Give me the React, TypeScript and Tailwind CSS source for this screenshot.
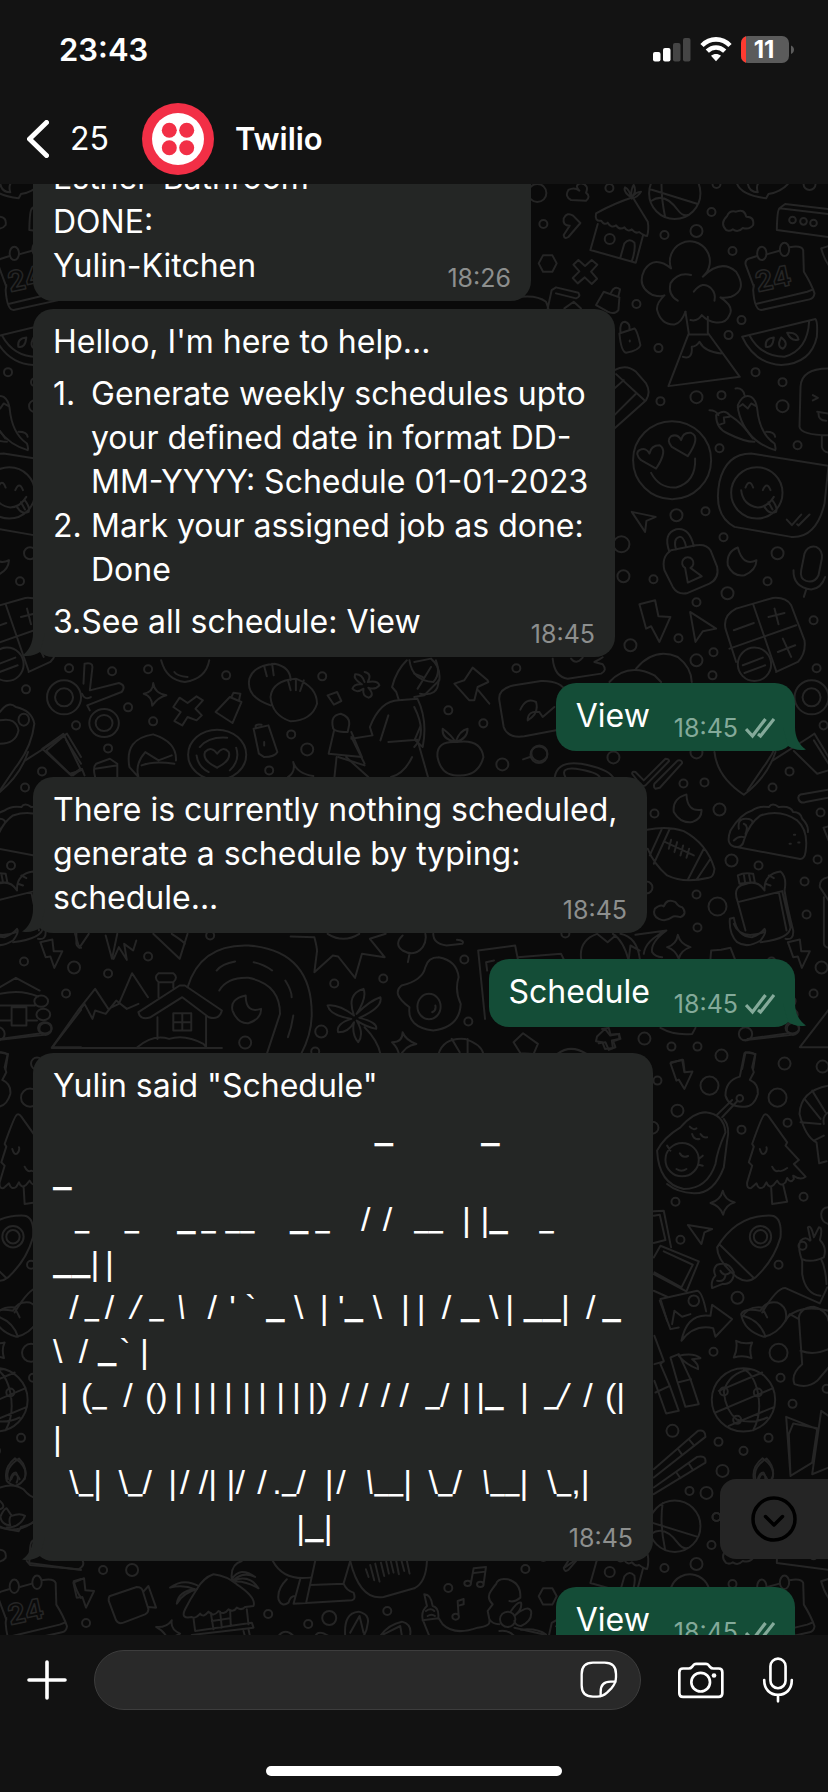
import type { ReactNode } from "react";

type Dot = [number, number, number?];

const dots: Dot[] = [
  [537, 193, 9], [609, 188], [543, 224], [664, 235], [696, 231, 6], [711, 212], [732, 251], [716, 184], [809, 184, 6],
  [636, 304], [741, 320], [728, 335], [658, 348], [755, 372], [782, 382], [782, 406, 6], [696, 397, 6], [721, 395],
  [660, 401], [719, 448], [797, 445], [676, 515, 6], [705, 511], [621, 544, 8], [623, 576, 6], [653, 579], [723, 537],
  [777, 553, 6], [767, 581], [727, 593, 6], [696, 602], [813, 620], [678, 638], [630, 645, 6], [696, 660, 6], [713, 652],
  [712, 675], [816, 668], [811, 697, 9], [811, 697, 17], [823, 725], [516, 668], [448, 710], [483, 723], [539, 753, 8],
  [613, 757, 6], [696, 752, 6], [789, 771], [683, 783], [704, 782], [772, 787], [654, 813], [719, 809, 6], [820, 812],
  [731, 860, 6], [758, 865], [817, 859], [804, 881], [646, 887, 6], [696, 894], [717, 906, 9], [806, 914], [697, 927],
  [821, 967, 6], [813, 993], [644, 1038, 6], [671, 1046], [697, 1046], [721, 1055, 6], [784, 1063, 6], [822, 1066, 6],
  [657, 1080], [709, 1085, 9], [677, 1110, 6], [652, 1127, 6], [741, 1129], [787, 1122], [777, 1097, 9], [675, 1201],
  [680, 1239], [803, 1196], [778, 1264], [737, 1297, 6], [713, 1351], [778, 1352, 9], [780, 1377], [792, 1403],
  [826, 1388], [672, 1430, 6], [718, 1441], [768, 1437], [743, 1450], [722, 1470, 6], [689, 1490], [706, 1492, 6],
  [716, 1516], [112, 671], [148, 669], [226, 675], [322, 676], [128, 707], [153, 721], [108, 748], [291, 734],
  [307, 749, 6], [269, 770], [502, 764, 6], [773, 689], [210, 935], [148, 956], [108, 973], [771, 961], [334, 983],
  [383, 978], [464, 959], [468, 1021], [321, 1031, 6], [245, 1042, 6], [315, 1051], [565, 933], [103, 1569],
  [132, 1569, 6], [86, 1622], [268, 1613], [308, 1623], [329, 1617, 7], [387, 1610], [448, 1587], [525, 1568],
];

/* Each patch of doodles has its own local grid, three units to a pixel. */
const patches: { at: string; d: string[] }[] = [
  {
    at: "translate(414 0) scale(.3333)",
    d: [
      "M545 640 Q540 665 560 662 q10 15 20 6 q10 18 25 8 q10 15 25 6 q10 15 22 6 q12 14 22 8 q16 12 24 12 Q704 690 700 665 L655 592 Q600 610 545 640Z",
      "M550 672 L528 750 L664 788 L686 706 M618 772 L630 730 Q645 712 660 728 Q664 750 652 784 M601 717 a15 15 0 1 0 -30 0 a15 15 0 1 0 30 0",
      "M650 592 Q625 575 632 562 Q645 568 650 592 Q650 565 658 555 Q668 575 652 592 Q665 575 680 575 Q672 590 652 596",
      "M858 580 a77 77 0 1 0 -154 0 a77 77 0 1 0 154 0 M705 567 L850 612 M745 510 Q735 570 752 650 M710 603 Q750 575 790 630 Q805 650 820 645",
      "M470 600 Q450 590 462 570 Q480 560 495 572 Q478 555 500 550 Q525 555 515 578 Q530 590 515 602Z",
      "M448 655 q10 -20 28 -8 l22 22 l-36 42 q-12 8 -14 -6 l18 -28 q-22 0 -18 -22Z",
      "M935 690 Q915 670 938 648 Q945 630 965 635 Q990 625 995 650 Q1020 650 1016 675 Q1005 690 985 684 Q970 700 955 688 Q945 695 935 690Z",
      "M1095 625 L1242 642 M1095 625 Q1088 630 1087 690 L1242 711 M1095 625 L1112 612 L1250 628 M1144 660 a10 10 0 1 0 -20 0 a10 10 0 1 0 20 0 M1177 664 a10 10 0 1 0 -20 0 a10 10 0 1 0 20 0 M1207 669 a10 10 0 1 0 -20 0 a10 10 0 1 0 20 0",
      "M968 552 Q980 585 1055 595 L1062 582 Q1100 575 1120 552 M1000 552 q5 25 30 25 q-5 -15 0 -25",
      "M386 766 L414 766 L427 790 L414 815 L386 815 L373 790Z",
      "M512 798 L532 780 L549 794 L530 815 L548 836 L532 852 L511 832 L490 850 L475 834 L495 814 L477 794 L492 780Z",
      "M770 805 A60 60 0 1 1 865 830 Q920 775 965 815 Q1000 870 950 890 Q930 895 918 892 Q960 920 945 945 Q935 970 905 967 Q880 965 862 945 Q850 965 828 960 M770 805 Q720 765 690 810 Q665 860 715 885 Q740 892 750 886 Q725 910 728 930 Q740 975 780 973 Q800 970 813 935",
      "M830 825 Q790 815 768 850 Q760 885 790 902 M838 875 Q865 840 890 865 Q905 880 900 902",
      "M1028 768 L1002 776 Q990 782 994 795 L1018 860 M1056 763 L1095 752 M1125 742 Q1160 735 1166 750 L1168 815 Q1190 850 1200 880 Q1198 895 1185 898 L1040 930 Q1020 930 1016 870 L1018 855 M1024 912 L1178 875 L1196 868",
      "M1056 760 a14 20 0 1 0 -28 0 a14 20 0 1 0 28 0 M1124 748 a14 20 0 1 0 -28 0 a14 20 0 1 0 28 0",
      "M400 925 L412 870 L425 862 L492 878 Q500 890 485 895 L425 880 M450 925 L478 905 L500 925 M320 890 Q370 885 395 905 L402 925",
      "M545 915 L568 875 L615 892 L612 930 Q600 945 580 935Z M590 878 Q600 855 617 868 L612 888",
      "M1220 745 L1242 738 M1220 745 Q1228 775 1242 795",
    ],
  },
  {
    at: "translate(414 300) scale(.3333)",
    d: [
      "M813 35 L823 100 L762 258 L976 230 L880 98 L880 50 M823 103 H880 M805 170 Q835 180 832 140 Q845 140 855 125 Q870 155 920 160",
      "M615 100 L660 85 Q668 90 678 135 Q675 150 635 158 Q620 155 615 100 M618 98 Q615 65 632 65 Q648 70 645 88 M646 121 v3",
      "M983 110 L1203 57 Q1210 65 1207 110 Q1190 190 1100 195 Q1020 190 983 110 M1005 106 Q1040 170 1110 170 Q1180 150 1184 62",
      "M1078 112 Q1050 115 1054 140 Q1075 145 1078 112 M1100 112 Q1085 140 1105 146 Q1125 130 1100 112 M1118 98 Q1130 125 1152 118 Q1148 95 1118 98",
      "M600 210 Q635 190 665 215 L695 250 Q710 275 695 300 L600 385 M605 222 L690 300 M600 265 L628 240 M600 345 L665 280",
      "M905 345 Q905 385 940 400 Q990 425 1020 425 M905 345 Q930 325 945 345 Q985 370 1015 415 M885 330 Q905 330 912 345 M912 375 L930 368 L928 352 L945 350",
      "M970 315 Q985 280 1010 290 Q1025 300 1028 325 Q1035 400 1080 430 Q1085 445 1082 450 Q1000 425 975 345 Q970 330 970 315 M963 265 Q985 262 990 285 M1055 395 Q1080 395 1082 410 M970 322 L985 312 L1000 325 L1010 310 L1025 318",
      "M1242 205 Q1160 205 1158 260 L1155 380 Q1160 405 1242 405 M1195 285 l15 8 -15 8 M1222 405 V440 Q1225 455 1242 457 M1208 335 L1242 340 M1212 336 Q1210 362 1235 362",
      "M890 480 a117 117 0 1 0 -234 0 a117 117 0 1 0 234 0 M725 505 L680 480 Q660 460 675 450 Q695 440 705 460 Q710 435 735 435 Q762 450 725 505 M820 468 L772 440 Q755 420 770 408 Q790 400 800 420 Q805 395 830 398 Q860 410 820 468 M710 518 Q735 565 785 562 Q845 545 842 475",
      "M1242 497 L1010 460 Q935 460 915 545 Q895 645 960 680 L1130 710 Q1205 715 1230 610 L1242 497 M1104 578 a77 77 0 1 0 -154 0 a77 77 0 1 0 154 0 M993 562 q12 -28 23 0 M1045 570 q12 -28 23 0 M980 570 Q985 615 1030 622 Q1060 620 1078 590 M1050 620 Q1065 645 1085 635 Q1090 620 1072 598 M1062 606 l12 22 M1117 658 L1132 675 L1160 643 M1148 672 L1152 676 L1185 643",
      "M652 635 L724 650 L696 662 L692 695Z",
      "M770 750 Q740 770 750 810 L775 860 Q790 885 820 878 L885 850 Q915 835 908 800 L888 750 Q875 730 845 735Z M765 755 Q745 700 785 687 Q825 680 838 738 M785 748 Q775 715 795 710 Q808 708 815 740 M812 803 a17 17 0 1 1 16 0 L862 828 L820 847Z",
      "M970 742 Q935 755 940 795 Q955 830 990 825 Q1025 810 1026 780 Q985 800 970 742Z",
      "M1170 760 Q1180 735 1205 740 Q1225 750 1222 775 L1212 825 Q1200 850 1175 842 Q1155 835 1160 810Z M1137 810 Q1135 860 1190 868 Q1220 865 1232 830 M1175 868 L1168 890",
      "M675 912 L722 900 L732 948 L768 950 L735 1025 L710 978 L695 985Z M827 935 L905 985 L865 993 L843 1025Z",
      "M965 925 L1075 893 Q1115 890 1130 915 L1170 1020 Q1175 1060 1150 1085 L1085 1115 M965 925 Q925 945 933 985 L965 1085 M1017 915 L1085 1112 M945 1045 L1145 975 M958 990 L1018 968 M1080 925 L1092 972 M1062 950 L1110 938 M1090 1055 L1142 1035 M1105 1015 L1130 1070",
      "M1070 1092 a50 50 0 1 0 -100 0 a50 50 0 1 0 100 0 M985 1095 L1045 1072 M990 1118 L1052 1095",
      "M665 1105 Q720 1040 790 1070 Q830 1100 832 1145 M585 1145 Q640 1085 720 1125 L740 1145",
      "M415 1075 Q420 1130 460 1135 L560 1120 Q580 1110 565 1092 L540 1085 Q560 1075 565 1071 M470 1075 Q485 1095 505 1072",
      "M175 1102 L220 1140 L222 1145 L190 1160 L180 1200 L165 1200 L120 1150 L150 1140Z M192 1170 L225 1210",
      "M255 1200 Q250 1165 300 1155 L380 1142 Q440 1140 455 1175 M255 1200 L268 1280 Q280 1315 330 1308 L425 1290 M318 1228 Q335 1190 365 1205 Q375 1240 340 1260 Q340 1230 375 1235 L385 1250 L420 1220",
      "M1075 1380 L1185 1310 L1200 1300 L1242 1370 M0 1085 L50 1075 Q80 1100 75 1140 L30 1185 L0 1190 M0 1120 L25 1130 M10 1165 L50 1100 M0 1220 Q40 1300 0 1340",
    ],
  },
  {
    at: "translate(600 740) scale(.3333)",
    d: [
      "M95 100 Q95 92 105 95 L130 120 L195 55 Q205 55 206 62 L135 135 Q125 140 118 130Z M165 145 Q158 140 162 130 L232 60 Q245 58 245 68 L178 142Z",
      "M342 35 Q350 110 430 163 Q500 110 525 35 M258 162 Q215 175 220 215 Q240 250 275 245 Q305 235 303 208 Q260 215 258 162Z",
      "M140 268 Q200 255 250 272 Q320 310 342 385 Q340 410 325 412 Q250 430 200 405 Q160 370 142 325 M208 265 L160 370 M185 264 L148 345 M310 325 L262 418 M330 355 L288 418 M195 305 L280 345 M212 298 L205 325 M230 305 L222 335 M248 315 L240 345 M266 325 L258 352",
      "M400 318 Q375 310 390 270 Q420 220 455 210 Q475 195 505 200 Q515 185 535 200 Q570 195 578 215 Q600 215 605 235 Q625 255 622 275 M400 318 L595 355 Q612 358 615 335 Q625 270 590 240 Q540 205 480 225 Q445 250 430 300 Q425 325 400 318 M415 265 q-5 -30 20 -30 q25 0 20 15 M430 250 q15 5 5 30 M400 300 q15 -15 30 -10",
      "M580 283 h4 M567 310 h4 M593 306 h4",
      "M412 485 L545 452 L570 560 Q568 595 480 605 M412 485 Q395 440 430 432 Q470 415 492 450 M412 485 L435 570 M535 455 L558 570 M552 450 Q560 500 578 570 Q580 600 555 595 M417 430 L412 405 Q430 395 458 400 L463 425 Q440 425 417 430 M430 402 L434 428 M445 400 L450 425 M492 450 Q490 400 540 393 Q560 410 552 450 M505 405 l15 8 M495 430 l15 5",
      "M388 535 L400 532 Q410 590 455 590 Q480 580 492 565 Q500 575 480 600 Q440 625 410 605 Q385 580 388 535Z M400 550 Q420 600 490 575",
      "M175 535 Q155 525 163 505 Q180 490 190 498 Q200 472 225 485 Q235 500 245 500 Q262 520 240 530 Q220 525 215 530 Q195 545 175 535Z",
      "M232 583 Q240 612 270 620 Q240 630 235 655 Q225 628 200 620 Q228 612 232 583Z M562 605 L598 597 L602 632 L628 632 L604 682 L592 648 L578 650Z",
      "M105 583 L198 570 Q150 605 155 635 Q165 650 185 650 M130 640 Q135 600 195 572 M330 655 L332 630 L362 628 L390 622 L403 655 M60 580 Q110 590 118 655 M90 615 L85 655 M90 615 L118 630",
      "M684 410 Q655 415 658 440 L684 480 M670 470 V610 Q672 620 684 622 M684 148 L600 162 Q590 168 595 178 Q600 190 615 185 L684 172 M669 262 L684 258 M669 262 L684 300 M580 32 L650 100 L684 90 M640 0 L684 70",
      "M5 865 L25 862 L30 882 L55 880 L60 895 L38 902 L45 920 L25 928 L15 905 L-5 908 M180 862 Q220 885 275 880 L285 862 M455 880 a20 20 0 1 0 -40 0 a20 20 0 1 0 40 0 M595 865 a18 18 0 1 0 -36 0 a18 18 0 1 0 36 0 M430 899 L580 882 M598 920 H684 M598 920 L684 808 M425 985 L435 935 L465 940 L458 985 M212 965 L248 958 L252 990",
    ],
  },
  {
    at: "translate(400 1040) scale(.3333)",
    d: [
      "M810 68 L845 57 L852 95 L876 93 L852 145 L835 117 L828 120Z",
      "M1032 38 Q1050 30 1064 42 L1055 80 L1060 95 L1048 118 Q1075 130 1072 160 Q1060 200 1030 198 Q985 200 975 165 Q975 120 1018 108Z M1028 173 a10 10 0 1 0 -20 0 a10 10 0 1 0 20 0 M1010 182 L965 230 M995 178 L950 222",
      "M770 330 Q790 290 840 260 Q880 215 915 215 Q970 220 975 275 Q950 330 945 370 Q920 445 850 445 Q775 430 770 330Z M970 235 Q990 260 980 300 L970 380 Q940 460 880 458 Q830 455 800 430 M895 357 a50 50 0 1 0 -100 0 a50 50 0 1 0 100 0 M868 258 q10 12 20 5 M875 280 q5 18 22 15 M900 280 q8 12 20 10 M838 338 q8 15 25 8 M828 385 q15 10 30 0 M800 315 l10 15 M895 355 l12 -10 M895 372 l12 3",
      "M1092 222 Q1085 225 1055 310 L1060 318 L1045 365 L1055 375 L1040 425 Q1038 445 1052 442 L1068 428 Q1075 450 1090 438 L1098 425 Q1105 445 1120 432 L1130 420 Q1140 440 1155 425 L1160 412 Q1170 430 1180 415 L1178 405 Q1200 420 1215 408 L1180 370 L1195 358 L1155 315 L1160 305 L1105 228 Q1098 218 1092 222Z M1112 440 L1115 490 L1160 483 L1148 432 M1078 325 q5 20 15 13 q8 -8 5 -18 M1115 378 q8 18 20 12 q5 5 25 -8",
      "M967 450 Q972 478 1003 485 Q975 492 968 522 Q958 495 930 487 Q960 478 967 450Z M862 553 L935 565 L912 575 L903 610Z",
      "M950 620 Q1010 520 1115 525 Q1145 530 1140 590 Q1120 660 1065 710 Q1040 730 1010 710 Q950 660 950 620 M958 612 L1060 712 M1112 588 a32 32 0 1 0 -64 0 a32 32 0 1 0 64 0 M1100 588 a20 20 0 1 0 -40 0 a20 20 0 1 0 40 0 M950 672 Q985 660 1000 695 Q1000 730 965 730 L935 742 Q930 720 945 705 Q935 685 950 672 M960 690 q10 20 30 5 M950 720 q20 5 25 -15",
      "M760 512 L790 510 L812 620 M760 525 L778 522 L795 598 L760 607 M780 615 L895 662 L858 752 L760 700 M790 632 L877 672 L843 740 L762 695 M780 615 L760 650",
      "M1205 660 Q1190 620 1200 600 Q1215 585 1228 600 M1230 598 L1222 560 Q1232 550 1240 590 L1255 560 Q1268 560 1258 598 Q1280 620 1270 650 Q1230 668 1205 655 L1205 700 Q1215 760 1260 765 M1262 655 Q1275 680 1278 730 M1218 615 a12 12 0 1 0 -24 0 a12 12 0 1 0 24 0",
      "M1085 815 Q1130 740 1155 742 L1258 788 L1280 740 M760 750 L800 768 M780 775 L890 750 Q905 752 917 812 M780 775 L800 840 M896 780 a16 16 0 1 0 -32 0 a16 16 0 1 0 32 0 M1025 830 Q1040 795 1085 800 L1100 830 M1160 830 Q1200 790 1284 810",
      "M1284 135 Q1200 150 1197 220 Q1215 290 1248 305 L1256 368 L1278 362 M1212 175 L1260 235 M1200 245 L1260 250 M1235 150 L1275 215 M1270 250 Q1265 225 1284 215 M1270 285 L1240 300 M1284 550 Q1262 545 1262 520 Q1265 500 1284 500",
    ],
  },
  {
    at: "translate(400 1300) scale(.3333)",
    d: [
      "M843 120 Q860 35 930 45 L935 12 L995 55 L945 108 L938 82 Q880 70 843 120Z M778 0 L810 85 L835 80 M815 70 L822 30 L845 48 L870 40",
      "M1090 108 Q1030 90 1022 40 Q1030 20 1080 30 Q1095 0 1130 5 Q1165 20 1155 60 Q1130 100 1090 108 M1028 45 Q1080 60 1095 108",
      "M1195 50 Q1200 20 1240 18 Q1280 30 1284 60 M1195 50 L1205 190 Q1170 220 1182 250 Q1220 265 1250 240 L1284 200 M1200 150 Q1240 165 1284 145 M1155 60 L1168 40 L1195 55 M1007 120 Q1030 132 1055 125 Q1045 145 1053 172 Q1028 162 1000 170 Q1012 145 1007 120",
      "M1124 297 a95 95 0 1 0 -190 0 a95 95 0 1 0 190 0 M945 335 L1118 262 M955 270 L1085 215 M985 375 L1122 318 M970 272 Q985 215 1050 205 M970 272 Q975 330 1010 357 Q1060 370 1100 350 M1072 275 Q1060 220 1030 205 M1072 275 Q1085 340 1058 388 M982 272 a12 12 0 1 0 -24 0 a12 12 0 1 0 24 0 M1084 275 a12 12 0 1 0 -24 0 a12 12 0 1 0 24 0 M1022 357 a12 12 0 1 0 -24 0 a12 12 0 1 0 24 0",
      "M762 105 L790 180 L780 190 L808 255 L835 330 L797 338 L762 240 M762 190 L790 182 M765 275 L808 255 M810 170 L835 160 L870 235 L895 310 L855 318 L830 240Z M832 245 L872 235 M835 165 Q880 155 900 172 L875 175 Q895 190 893 205 Q855 190 835 165",
      "M760 505 L893 390 Q915 385 915 408 L760 530 M760 560 L890 468 Q918 462 915 485 L760 580 M832 443 L845 462 M865 415 L882 435 M828 515 L840 532 M865 488 L878 508",
      "M1157 348 L1250 385 L1235 485 L1170 525Z M1170 525 L1165 400 L1178 368 L1250 382 M1284 345 L1262 330 L1235 520 L1284 500 M1065 535 Q1055 500 1098 473 Q1125 500 1115 535 M1075 535 Q1085 505 1100 535",
    ],
  },
  {
    at: "translate(747 1300) scale(.3333)",
    d: [
      "M20 540 Q10 500 45 472 Q85 500 75 530 Q65 550 45 555 Q28 550 20 540 M30 540 Q35 515 48 515 Q58 530 50 545 M0 560 Q40 545 70 565 Q90 590 110 592 M0 600 Q20 620 0 625 M0 680 Q60 700 110 655 M0 650 Q10 625 20 622 L35 645 Q60 635 75 645 Q60 680 20 680",
    ],
  },
  {
    at: "translate(0 660) scale(.528 .3333)",
    d: [
      "M158 70 L160 10 Q175 5 175 20 L170 90 L225 68 Q240 75 230 95 L165 135 L170 150 M225 188 a28 42 0 1 0 -56 0 a28 42 0 1 0 56 0 M213 188 a16 24 0 1 0 -32 0 a16 24 0 1 0 32 0 M155 100 Q160 120 172 110",
      "M290 68 Q292 98 315 105 Q300 110 288 136 Q288 108 272 100 Q290 95 290 68Z M340 112 L355 128 L372 108 L384 120 L370 145 L382 165 L372 180 L355 170 L345 195 L330 182 L342 155 L328 140Z M408 155 L435 110 L457 125 L440 188Z M438 110 L442 97 L455 100 L452 122",
      "M305 0 Q315 60 350 65 Q390 55 396 0 M330 35 q5 12 25 15 M512 135 Q465 110 472 55 Q480 15 520 10 Q550 20 550 60 M512 110 Q515 60 560 55 Q600 80 600 130 Q590 180 550 183 Q515 165 512 110 M545 60 L550 90 M560 55 V90 M575 60 L568 92 M500 18 L505 48 M515 10 L518 45 M620 105 L638 95 L646 122 L632 133Z",
      "M690 35 Q705 40 696 65 Q715 60 718 75 Q710 90 697 82 Q710 105 698 112 Q685 108 688 85 Q675 100 667 85 Q670 70 685 72 Q668 55 672 42 Q685 40 690 65",
      "M770 0 Q750 30 742 80 L750 95 L755 120 Q720 120 700 200 L705 225 L665 235 M755 120 L790 115 Q810 180 800 260 L785 238 L795 200 M775 0 Q780 60 820 65 Q835 40 825 0 M795 100 Q830 110 830 60 M735 245 L790 238 L810 350 M735 165 L720 240 M665 230 L690 310 M640 290 L690 315 M780 290 Q765 340 740 350",
      "M630 200 Q625 165 645 160 Q665 170 660 200 L658 215 Q630 215 630 200 M632 212 L622 280 L685 290 L665 215 M637 290 L633 350 M655 290 L697 350",
      "M865 245 Q825 240 828 290 Q835 345 865 345 Q905 350 915 290 Q910 235 865 245 M862 245 Q855 225 838 205 Q835 235 862 245 Q870 210 885 205 Q885 235 862 245",
      "M480 205 L508 195 L525 275 Q520 290 500 290 L490 280Z M485 203 Q480 190 495 193 M500 245 v10 M80 265 L120 220 L152 325 L135 345Z M138 345 L155 325 L160 345 M88 270 L122 225",
      "M245 320 Q235 235 290 222 Q335 245 333 300 M262 350 Q255 310 275 275 L300 300 L325 285 M268 315 Q290 300 330 310 M245 320 L262 350 M466 283 a55 75 0 1 0 -110 0 a55 75 0 1 0 110 0 M378 260 Q395 228 430 232 M372 285 Q375 320 395 335 M447 262 Q455 300 435 330 M411 322 Q382 300 388 275 Q400 255 411 280 Q422 255 433 275 Q438 300 411 322",
      "M180 350 Q175 320 182 310 L208 295 L222 310 V350 M180 325 L220 315 M555 305 Q562 340 593 347 M555 305 Q560 335 545 350 M1036 283 a16 25 0 1 0 -32 0 a16 25 0 1 0 32 0 M990 297 L1003 290 M1050 350 Q1055 300 1100 310 Q1150 325 1160 350 M1070 350 Q1060 320 1090 325 Q1130 335 1135 350",
      "M142 820 L150 862 L168 820 M200 825 L212 895 L222 820 M215 895 L225 860 L240 898 L235 850 L252 870 L258 840 M290 820 L340 895 L355 820 M325 820 Q345 840 350 850",
      "M355 980 Q380 850 470 855 Q590 870 590 1060 Q590 1120 570 1180 M415 990 Q430 950 470 952 Q530 970 530 1060 L505 1180 M410 930 Q420 910 445 903 M480 905 Q500 912 515 930 M540 960 Q552 990 552 1010 M555 1065 Q552 1100 545 1130 M465 1005 Q435 1015 440 1050 Q450 1090 470 1088 Q495 1075 494 1045 Q465 1060 465 1005Z",
      "M550 828 L595 830 Q600 860 600 872 L595 935 L630 885 L640 888 L672 952 L685 880 L728 890 L700 835 L730 820 M620 820 Q650 850 680 820",
      "M98 1162 H420 M98 1162 L150 1045 L180 985 L205 1045 L225 1030 L250 938 L280 1010 M150 1050 L160 1030 L175 1075 L180 1050 L200 1060 L220 1020 L240 1045 L262 1030",
      "M262 1055 L340 975 L350 975 L420 1050 Q415 1080 395 1070 L345 1010 L285 1070 Q265 1080 262 1055 M300 1010 V965 Q290 950 300 938 H328 Q338 950 328 965 V982 M302 965 H328 M298 1070 V1135 M390 1068 V1160 M328 1058 H362 V1110 H328Z M345 1058 V1110 M328 1085 H362 M260 1160 Q290 1120 320 1135 Q350 1120 385 1150 L390 1160",
      "M670 1065 Q655 1000 688 985 Q695 1010 675 1060 Q700 1020 720 1010 Q725 1040 680 1072 Q715 1085 712 1105 Q695 1100 675 1080 Q690 1120 678 1145 Q665 1120 670 1085 Q660 1115 640 1115 Q635 1090 665 1075 Q625 1065 620 1035 Q640 1030 670 1065 M690 1100 Q715 1140 720 1180",
      "M830 890 Q865 900 868 950 Q860 990 872 1030 Q870 1100 820 1110 Q770 1100 775 1040 Q740 1000 760 975 Q800 960 805 920 Q810 890 830 890 M834 1038 a22 38 0 1 0 -44 0 a22 38 0 1 0 44 0 M818 1055 q8 -5 6 -20",
      "M762 825 Q745 850 762 870 Q785 890 800 860 Q808 840 805 820 M775 880 L772 905 M820 820 Q820 850 845 855 L875 850 Q880 840 865 838 M980 895 L975 855 L905 870 L918 1075 M922 930 L920 905 L935 900 M980 890 L1062 880 L1068 900 M1100 895 Q1095 840 1130 820 M1160 820 Q1180 840 1190 900 M1130 820 L1150 845 L1165 825",
      "M762 1115 Q768 1140 788 1150 Q765 1155 757 1190 M762 1115 Q762 1145 742 1145 Q755 1165 755 1185 M830 1180 Q840 1130 880 1135 Q910 1150 915 1180 M855 1135 L870 1175 M885 1135 V1180 M990 1118 L1018 1150 L1010 1180 L985 1178 L972 1145Z M1055 1180 Q1080 1150 1110 1180 M1145 1105 L1155 1125 L1172 1120 V1135 L1158 1140 L1160 1162 L1145 1165 L1140 1145 L1128 1142 L1130 1128Z",
    ],
  },
  {
    at: "translate(747 660) scale(.528 .3333)",
    d: [
      "M0 155 Q15 120 30 140 Q60 150 65 190 Q60 260 30 320 L0 390 M55 178 a10 18 0 1 0 -20 0 a10 18 0 1 0 20 0 M0 180 Q30 170 35 210 Q30 250 0 250",
      "M0 980 L30 952 L75 990 M0 1000 Q40 985 72 1008 M91 1022 a13 17 0 1 0 -26 0 a13 17 0 1 0 26 0 M95 1062 a13 17 0 1 0 -26 0 a13 17 0 1 0 26 0 M98 1102 a13 17 0 1 0 -26 0 a13 17 0 1 0 26 0 M22 1040 H50 V1095 H22Z M0 1035 H66 M0 1080 H20 M52 1080 H70 M0 1135 L78 1118",
    ],
  },
  {
    at: "translate(0 1560) scale(.3333)",
    d: [
      "M220 65 L252 52 L256 88 L282 90 L258 140 L247 108 L230 110Z M330 105 L410 78 Q425 78 428 90 L445 145 Q445 155 435 160 L370 185 Q355 190 348 178 L326 120 Q325 108 330 105 M430 92 L445 75 L468 140 L445 138",
      "M575 168 Q540 175 555 145 Q570 115 590 85 Q610 50 640 40 Q680 45 710 70 Q770 110 760 135 L735 138 Q725 150 710 140 Q700 155 685 145 Q670 165 655 150 Q640 170 625 152 Q610 172 600 158 Q585 175 575 168Z M580 170 L585 210 L755 185 L760 200 L575 222 M632 155 L640 205 M690 148 L692 195 M660 152 L665 200 M635 180 L690 172 M740 145 L745 190 M730 210 L735 228 M745 205 L750 228",
      "M595 75 Q550 50 510 80 Q550 70 585 85 Q535 90 530 128 Q550 95 590 85 M695 55 Q690 10 725 0 M695 55 Q720 15 765 48 Q730 30 700 58 Q750 40 775 82 Q735 60 705 62 M515 178 Q510 205 540 218 L520 228 M515 178 Q500 200 468 198 Q490 210 500 228",
      "M80 0 L90 12 L235 25 Q255 15 248 0 M818 0 Q850 60 930 50 M945 0 L918 125 M1050 0 L1030 68 Q1040 90 1060 95 Q1068 115 1055 118 L880 128 L900 55 M930 72 L1030 68 M860 55 Q830 85 835 115 Q845 140 865 125 Q870 105 885 105",
      "M1050 0 Q1080 120 1150 108 L1242 82 M1097 25 L1105 48 M1110 12 L1122 58 M1125 8 L1138 62 M1142 5 L1152 45 M1158 2 L1166 38 M1172 2 L1180 35 M1188 0 L1196 40 M1204 0 L1212 30 M1220 0 L1228 38",
      "M1035 225 Q1030 155 1075 152 Q1110 160 1102 190 Q1100 210 1090 225 M1050 215 L1078 165 L1090 215 M1140 225 Q1165 190 1205 182 Q1235 190 1230 220 M1150 220 L1200 195 L1205 225 M835 225 Q855 200 880 225 M945 225 Q955 205 985 225",
    ],
  },
  {
    at: "translate(414 1560) scale(.3333)",
    d: [
      "M0 82 Q35 65 38 0 M170 65 L178 22 L215 18 L208 68 M178 36 L213 32 M170 67 a10 8 0 1 0 -20 0 a10 8 0 1 0 20 0 M208 70 a10 8 0 1 0 -20 0 a10 8 0 1 0 20 0 M133 165 L130 120 L148 114 V130 L133 134 M134 167 a10 9 0 1 0 -20 0 a10 9 0 1 0 20 0",
      "M30 100 Q50 100 55 135 Q75 140 72 170 L85 190 Q120 225 190 200 Q230 195 225 180 M30 100 L38 135 Q20 150 25 175 L45 225 M35 150 q15 -10 25 0 M40 165 q12 -8 22 0 M25 178 L72 172",
      "M235 130 Q215 110 230 90 Q240 75 245 70 Q250 50 280 55 Q320 65 318 110 Q300 125 285 120 M235 130 L220 150 L225 175 Q235 190 255 190 M303 175 a23 23 0 1 0 -46 0 a23 23 0 1 0 46 0 M290 150 Q310 120 320 125 Q325 145 300 165 Q340 130 350 150 Q355 180 320 195 Q305 195 300 180 M300 200 L395 222 M255 210 Q280 205 300 225 M450 20 L480 0",
    ],
  },
];

const tileShifts: [number, number][] = [[0, 0], [-747, 0], [0, 1332], [-747, 1332]];

function Doodles() {
  return (
    <g fill="none" stroke="#252525" strokeWidth={2} strokeLinecap="round" strokeLinejoin="round">
      {dots.map(([x, y, r = 4], i) => <circle key={i} cx={x} cy={y} r={r} />)}
      {patches.map((p, i) => (
        <g key={i} transform={p.at}>
          {p.d.map((d, j) => <path key={j} d={d} vectorEffect="non-scaling-stroke" />)}
        </g>
      ))}
      <text x="757" y="292" fontSize="28" fontWeight="700" fontFamily="Inter, sans-serif" strokeWidth={1.5} transform="rotate(-12 757 292)">24</text>
    </g>
  );
}

function Wallpaper() {
  return (
    <svg aria-hidden="true" className="absolute inset-0 h-full w-full" viewBox="0 184 828 1450" preserveAspectRatio="xMinYMin slice">
      {tileShifts.map(([x, y]) => (
        <g key={`${x}:${y}`} transform={`translate(${x} ${y})`}><Doodles /></g>
      ))}
    </svg>
  );
}

function Ticks() {
  return (
    <svg aria-label="Delivered" viewBox="0 0 30 22" className="h-[22px] w-[30px]" fill="none" stroke="currentColor" strokeWidth="3.2">
      <path d="M1 12 L7.5 19 L20.5 2" />
      <path d="M13 17 L15.5 19 L29 2" />
    </svg>
  );
}

function Incoming({ width, time, tail, children }: { width: string; time: string; tail?: boolean; children: ReactNode }) {
  return (
    <article className={`relative ml-[33px] max-w-[80%] rounded-[20px] bg-[#242625] px-5 pt-[11px] pb-[13px] ${width}`}>
      {children}
      <time className="absolute right-5 bottom-[7px] text-[25px] leading-8 text-[#8d8f8e]">{time}</time>
      {tail && (
        <svg aria-hidden="true" viewBox="0 0 24 24" className="absolute bottom-0 -left-3 h-6 w-6 text-[#242625]" fill="currentColor">
          <path d="M12 0 C12 10 8 18 1 22.500 C8 24 15 22 19 19 L24 0 Z" />
        </svg>
      )}
    </article>
  );
}

function Outgoing({ text, time }: { text: string; time: string }) {
  return (
    <article className="relative mr-[33px] flex items-end gap-6 self-end rounded-[20px] bg-[#144d37] px-5 pt-[11px] pb-[13px]">
      <p>{text}</p>
      <div className="-mb-1.5 flex items-center gap-[7px] text-[#84aa9a]">
        <time className="text-[25px] leading-8">{time}</time>
        <Ticks />
      </div>
      <svg aria-hidden="true" viewBox="0 0 24 24" className="absolute -right-3 bottom-0 h-6 w-6 text-[#144d37]" fill="currentColor">
        <path d="M12 0 C12 10 16 18 23 22.500 C16 24 9 22 5 19 L0 0 Z" />
      </svg>
    </article>
  );
}

/* In the rows below "~" is a light underscore, "«" and "»" are a slanted "/" and "\",
   ":" is a hair space and ";" a thin space. */
const s = (n: number) => " ".repeat(n);
const banner = [
  s(34) + "_" + s(9) + ":_",
  "_",
  "  :~   ;~    _::~ ~~   ;_;~   :/ :/  :~~  | |_   :~",
  "__|::|",
  " ;/::~::/ ;« ~ :»  :/ :' ` _ \\ ;| '_ \\  |;| ;/ _ \\;| __| ;/;_",
  "\\ ;/ _:` |",
  ";| :(~ ;/ :();| |;|;| |;| |;|;|) :/ / :/ / ;~/ :|::|_ ;| ::~« ::/ :(|",
  "|",
  " ;\\~| ;\\~/ ;|:/ /| |/ :/::.~/  |:/  »~~| ;\\~/  »~~|  \\~,|",
  s(25) + ";|_|",
];

function BannerRow({ row }: { row: string }) {
  return (
    <p className="h-11 whitespace-pre">
      {[...row].map((c, i) => {
        if (c === "~") return <span key={i} className="font-[Inter] text-[32px] leading-none">_</span>;
        if (c === "_") return <span key={i} className="font-[Inter] text-[41px] leading-none">_</span>;
        if (c === "«") return <i key={i}>/</i>;
        if (c === "»") return <i key={i}>\</i>;
        return c === ":" ? "\u200a" : c === ";" ? "\u2009" : c;
      })}
    </p>
  );
}

function StatusBar() {
  return (
    <div className="flex items-center justify-between pr-[33px] pl-[59px]">
      <time className="text-[31px] leading-10 font-semibold">23:43</time>
      <svg aria-label="Two bars of signal, Wi-Fi on, battery at 11 percent" viewBox="0 0 142 28" className="h-7 w-[142px]">
        <rect x="0" y="16" width="7.500" height="9.500" rx="2" fill="#fff" />
        <rect x="10" y="12" width="7.500" height="13.500" rx="2" fill="#fff" />
        <rect x="20" y="7" width="7.500" height="18.500" rx="2" fill="#454545" />
        <rect x="30" y="2" width="7.500" height="23.500" rx="2" fill="#454545" />
        <g fill="none" stroke="#fff" strokeWidth="4.600">
          <path d="M49 9.500 C57 1.300 69 1.300 77 9.500" />
          <path d="M54.300 15.200 C59.500 10.200 66.500 10.200 71.700 15.200" />
        </g>
        <path d="M58 19.800 C61 17.300 65 17.300 68 19.800 L63 25.300 Z" fill="#fff" />
        <clipPath id="cell"><rect x="88" y="0" width="48" height="27" rx="7" /></clipPath>
        <g clipPath="url(#cell)">
          <rect x="88" y="0" width="48" height="27" fill="#5b5b5b" />
          <rect x="88" y="0" width="5" height="27" fill="#ff3b30" />
        </g>
        <path d="M138 9.500 C142 11 142 16.500 138 18 Z" fill="#5b5b5b" />
        <text x="111" y="22" textAnchor="middle" fontSize="24" fontWeight="700" fontFamily="Inter, sans-serif" fill="#fff">11</text>
      </svg>
    </div>
  );
}

export default function App() {
  return (
    <div className="flex h-screen flex-col overflow-hidden bg-[#0a0a0a] font-[Inter,'Noto_Sans',sans-serif] text-[32px] leading-[44px] text-white">
      <header className="relative z-10 flex h-[184px] shrink-0 flex-col bg-[#131313] pt-[30px]">
        <StatusBar />
        <div className="mt-[33px] flex items-center pl-[27px]">
          <a href="#chats" aria-label="Back, 25 unread" className="flex items-center gap-[21px]">
            <svg aria-hidden="true" viewBox="0 0 22 38" className="h-[38px] w-[22px]" fill="none" stroke="#fff" strokeWidth="5" strokeLinecap="round" strokeLinejoin="round">
              <path d="M19.500 2.500 L2.500 19 L19.500 35.500" />
            </svg>
            <span>25</span>
          </a>
          <svg role="img" aria-label="Twilio" viewBox="0 0 72 72" className="ml-[33px] h-[72px] w-[72px]">
            <circle cx="36" cy="36" r="36" fill="#f22f46" />
            <circle cx="36" cy="36" r="26" fill="#fff" />
            <g fill="#f22f46">
              <circle cx="27.300" cy="27.300" r="7.500" /><circle cx="44.700" cy="27.300" r="7.500" />
              <circle cx="27.300" cy="44.700" r="7.500" /><circle cx="44.700" cy="44.700" r="7.500" />
            </g>
          </svg>
          <h1 className="ml-[21px] text-[31px] font-semibold">Twilio</h1>
        </div>
      </header>

      <main className="relative min-h-0 flex-1 overflow-hidden">
        <Wallpaper />
        <div className="relative -mt-[39px] flex flex-col gap-[26px]">
          <div className="flex flex-col gap-2">
            <Incoming width="w-[498px]" time="18:26">
              <p>Esther-Bathroom</p>
              <p>DONE:</p>
              <p>Yulin-Kitchen</p>
            </Incoming>
            <Incoming width="w-[582px]" time="18:45" tail>
              <p>Helloo, I'm here to help...</p>
              <ol className="my-2 list-none">
                <li className="flex"><span className="w-[38px] shrink-0">1.</span><span className="whitespace-nowrap">Generate weekly schedules upto<br />your defined date in format DD-<br />MM-YYYY: Schedule 01-01-2023</span></li>
                <li className="flex"><span className="w-[38px] shrink-0">2.</span><span className="whitespace-nowrap">Mark your assigned job as done:<br />Done</span></li>
              </ol>
              <p>3.See all schedule: View</p>
            </Incoming>
          </div>
          <Outgoing text="View" time="18:45" />
          <Incoming width="w-[614px]" time="18:45" tail>
            <p>There is currently nothing scheduled,<br />generate a schedule by typing:<br />schedule...</p>
          </Incoming>
          <Outgoing text="Schedule" time="18:45" />
          <Incoming width="w-[620px]" time="18:45" tail>
            <p>Yulin said "Schedule"</p>
            <div className="font-['Liberation_Sans',sans-serif] text-[34px]">
              {banner.map((row, i) => <BannerRow key={i} row={row} />)}
            </div>
          </Incoming>
          <Outgoing text="View" time="18:45" />
        </div>
        <button type="button" aria-label="Scroll to latest" className="absolute right-0 bottom-[76px] flex h-20 w-[108px] items-center rounded-l-2xl bg-[#252525] pl-[31px]">
          <svg aria-hidden="true" viewBox="0 0 46 46" className="h-[46px] w-[46px]" fill="none" stroke="#000" strokeWidth="3.500" strokeLinecap="round" strokeLinejoin="round">
            <circle cx="23" cy="23" r="21" />
            <path d="M14.500 20.500 L23 29 L31.500 20.500" />
          </svg>
        </button>
      </main>

      <footer className="relative z-10 flex shrink-0 flex-col items-center bg-[#121212] pt-[15px] pb-4">
        <form className="flex w-full items-center pr-[34px] pl-[27px]">
          <button type="button" aria-label="Attach">
            <svg aria-hidden="true" viewBox="0 0 40 40" className="h-10 w-10" stroke="#fff" strokeWidth="3.600" strokeLinecap="round">
              <path d="M20 2 V38 M2 20 H38" />
            </svg>
          </button>
          <div className="ml-[27px] flex h-[60px] min-w-0 flex-1 items-center rounded-full border border-[#3d3d3d] bg-[#292929] pr-[22px] pl-6">
            <input aria-label="Message" className="min-w-0 flex-1 bg-transparent outline-none" />
            <button type="button" aria-label="Stickers">
              <svg aria-hidden="true" viewBox="497 305 114 114" className="h-[38px] w-[38px]" fill="none" stroke="#fff" strokeWidth="7" strokeLinecap="round" strokeLinejoin="round">
                <path d="M536 310 H571 Q605 310 605 344 V354 Q605 372 591 387 L578 400 Q565 412 548 412 H536 Q502 412 502 378 V344 Q502 310 536 310Z" />
                <path d="M603 367 H589 Q559 367 559 397 V410" />
              </svg>
            </button>
          </div>
          <button type="button" aria-label="Camera" className="ml-[36px]">
            <svg aria-hidden="true" viewBox="787 302 144 116" className="h-[39px] w-12" fill="none" stroke="#fff" strokeWidth="8" strokeLinejoin="round">
              <path d="M805 324 H822 Q828 324 832 319 L838 312 Q841 310 845 310 H873 Q877 310 880 312 L886 319 Q890 324 896 324 H912 Q923 324 923 335 V398 Q923 409 912 409 H805 Q794 409 794 398 V335 Q794 324 805 324Z" />
              <circle cx="858" cy="365" r="28" />
              <circle cx="898" cy="345" r="7" fill="#fff" stroke="none" />
            </svg>
          </button>
          <button type="button" aria-label="Record voice message" className="ml-[37px]">
            <svg aria-hidden="true" viewBox="1044 287 96 140" className="h-[46px] w-8" fill="none" stroke="#fff" strokeWidth="8" strokeLinecap="round">
              <rect x="1069" y="292" width="46" height="90" rx="23" />
              <path d="M1050 357 C1050 386 1068 402 1092 402 C1116 402 1134 386 1134 357 M1092 402 V422" />
            </svg>
          </button>
        </form>
        <div className="mt-[56px] h-2.5 w-[296px] rounded-full bg-white" />
      </footer>
    </div>
  );
}
